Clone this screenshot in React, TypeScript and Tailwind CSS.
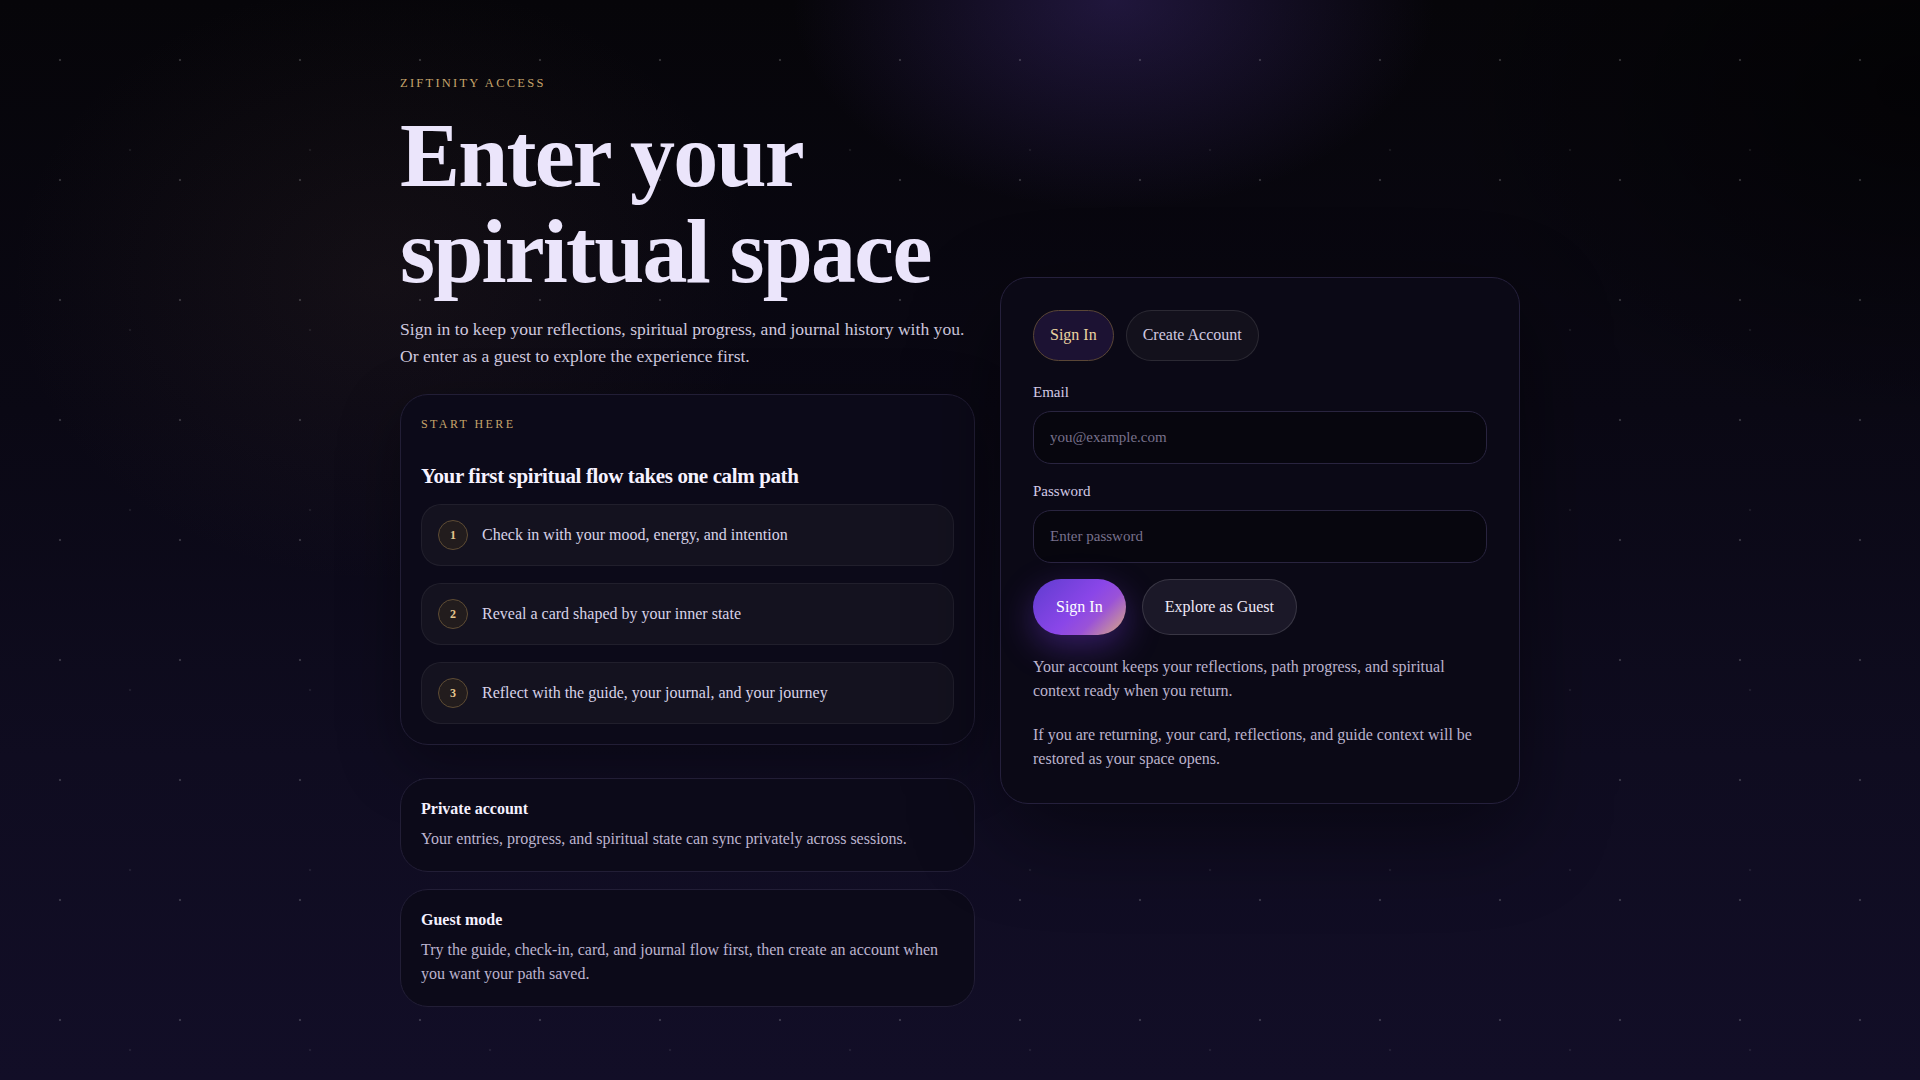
import { useState } from 'react'

const steps = [
  'Check in with your mood, energy, and intention',
  'Reveal a card shaped by your inner state',
  'Reflect with the guide, your journal, and your journey',
]

function Backdrop() {
  return (
    <div aria-hidden className="pointer-events-none absolute inset-0">
      <div className="absolute inset-0 bg-[linear-gradient(180deg,#060509_0%,#0a0814_38%,#0f0c20_70%,#120e27_100%)]" />
      <div className="absolute inset-0 bg-[radial-gradient(ellipse_460px_300px_at_58%_0%,rgba(92,62,178,0.30),transparent_70%)]" />
      <div className="absolute inset-0 bg-[radial-gradient(ellipse_520px_420px_at_20%_26%,rgba(120,88,70,0.10),transparent_72%)]" />
      <div className="absolute inset-0 bg-[radial-gradient(ellipse_700px_500px_at_100%_8%,rgba(0,0,0,0.55),transparent_70%)]" />
      <div className="absolute inset-0 bg-[radial-gradient(circle,rgba(255,255,255,0.17)_1px,transparent_1.6px)] [background-size:120px_120px]" />
      <div className="absolute inset-0 bg-[radial-gradient(circle,rgba(255,255,255,0.07)_1px,transparent_1.6px)] [background-size:180px_180px] [background-position:40px_60px]" />
    </div>
  )
}

function StepRow({ index, text }: { index: number; text: string }) {
  return (
    <div className="flex h-[62px] items-center gap-3.5 rounded-[20px] border border-white/[0.06] bg-[#14121f] px-4">
      <span className="flex h-[30px] w-[30px] shrink-0 items-center justify-center rounded-full border border-[#5e4c34] bg-[#221c1d] text-[12px] font-bold text-[#e4c58e]">
        {index}
      </span>
      <span className="text-[16px] leading-6 text-[#d8d2e8]">{text}</span>
    </div>
  )
}

function InfoCard({ title, children, className = '' }: { title: string; children: string; className?: string }) {
  return (
    <div className={`rounded-[28px] border border-[#221e36] bg-[#0c0a19] p-5 ${className}`}>
      <h3 className="text-[16px] font-bold leading-5 text-[#f5f1ff]">{title}</h3>
      <p className="mt-2 text-[16px] leading-6 text-[#bcb4cf]">{children}</p>
    </div>
  )
}

export default function App() {
  const [mode, setMode] = useState<'signin' | 'create'>('signin')

  return (
    <div className="relative min-h-screen overflow-hidden bg-[#0a0912] font-['Liberation_Serif','Times_New_Roman',serif]">
      <Backdrop />

      <main className="relative flex min-h-screen items-center justify-center">
        <div className="grid w-[1120px] grid-cols-[575px_520px] items-center gap-[25px]">
          <section>
            <p className="text-[12.5px] uppercase leading-[18px] tracking-[0.18em] text-[#c6a46b]">Ziftinity Access</p>
            <h1 className="mt-4 text-[90px] font-bold leading-[96px] tracking-[-0.02em] text-[#ebe5fb]">
              Enter your spiritual space
            </h1>
            <p className="mt-4 text-[17.6px] leading-[27px] text-[#cfc8df]">
              Sign in to keep your reflections, spiritual progress, and journal history with you. Or enter as a guest to explore the experience first.
            </p>

            <div className="mt-6 rounded-[28px] border border-[#221e36] bg-[#0c0a19] p-5 shadow-[0_20px_60px_rgba(0,0,0,0.35)]">
              <p className="text-[12px] uppercase leading-[18px] tracking-[0.2em] text-[#c6a46b]">Start here</p>
              <h2 className="mt-[30px] text-[21px] font-bold leading-[27px] tracking-[-0.018em] text-[#f6f2ff]">
                Your first spiritual flow takes one calm path
              </h2>
              <div className="mt-3.5 flex flex-col gap-[17px]">
                {steps.map((step, i) => (
                  <StepRow key={step} index={i + 1} text={step} />
                ))}
              </div>
            </div>

            <InfoCard title="Private account" className="mt-[33px]">
              Your entries, progress, and spiritual state can sync privately across sessions.
            </InfoCard>
            <InfoCard title="Guest mode" className="mt-[17px]">
              Try the guide, check-in, card, and journal flow first, then create an account when you want your path saved.
            </InfoCard>
          </section>

          <section className="rounded-[28px] border border-[#25203c] bg-[#0b0916] p-8 shadow-[0_30px_90px_rgba(0,0,0,0.45)]">
            <div className="flex gap-3">
              <button
                type="button"
                onClick={() => setMode('signin')}
                className={
                  mode === 'signin'
                    ? 'flex h-[51px] items-center rounded-full border border-[#5a4636] bg-[#1c1233] px-4 text-[16px] text-[#ead3a0]'
                    : 'flex h-[51px] items-center rounded-full border border-white/10 bg-[#13111c] px-4 text-[16px] text-[#cfc8e0]'
                }
              >
                Sign In
              </button>
              <button
                type="button"
                onClick={() => setMode('create')}
                className={
                  mode === 'create'
                    ? 'flex h-[51px] items-center rounded-full border border-[#5a4636] bg-[#1c1233] px-4 text-[16px] text-[#ead3a0]'
                    : 'flex h-[51px] items-center rounded-full border border-white/10 bg-[#13111c] px-4 text-[16px] text-[#cfc8e0]'
                }
              >
                Create Account
              </button>
            </div>

            <label className="mt-5 block text-[15px] leading-[22px] text-[#d3cbe6]">Email</label>
            <input
              type="email"
              placeholder="you@example.com"
              className="mt-2 h-[53px] w-full rounded-[18px] border border-[#29243f] bg-[#07060e] px-4 text-[15px] text-[#e9e4f5] outline-none placeholder:text-[#78718c]"
            />

            <label className="mt-4 block text-[15px] leading-[22px] text-[#d3cbe6]">Password</label>
            <input
              type="password"
              placeholder="Enter password"
              className="mt-2 h-[53px] w-full rounded-[18px] border border-[#29243f] bg-[#07060e] px-4 text-[15px] text-[#e9e4f5] outline-none placeholder:text-[#78718c]"
            />

            <div className="mt-4 flex gap-4">
              <button
                type="button"
                className="h-14 rounded-full bg-[linear-gradient(135deg,#5f3ccf_0%,#8a46e8_50%,#9a52d8_68%,#dcae80_100%)] px-[23px] text-[16px] text-white shadow-[0_12px_34px_rgba(120,60,230,0.38)]"
              >
                Sign In
              </button>
              <button
                type="button"
                className="h-14 rounded-full border border-white/[0.13] bg-[#1b1828] px-[22px] text-[16px] text-[#efe9f8]"
              >
                Explore as Guest
              </button>
            </div>

            <p className="mt-5 text-[16px] leading-6 text-[#bbb3cd]">
              Your account keeps your reflections, path progress, and spiritual context ready when you return.
            </p>
            <p className="mt-5 text-[16px] leading-6 text-[#bbb3cd]">
              If you are returning, your card, reflections, and guide context will be restored as your space opens.
            </p>
          </section>
        </div>
      </main>
    </div>
  )
}
